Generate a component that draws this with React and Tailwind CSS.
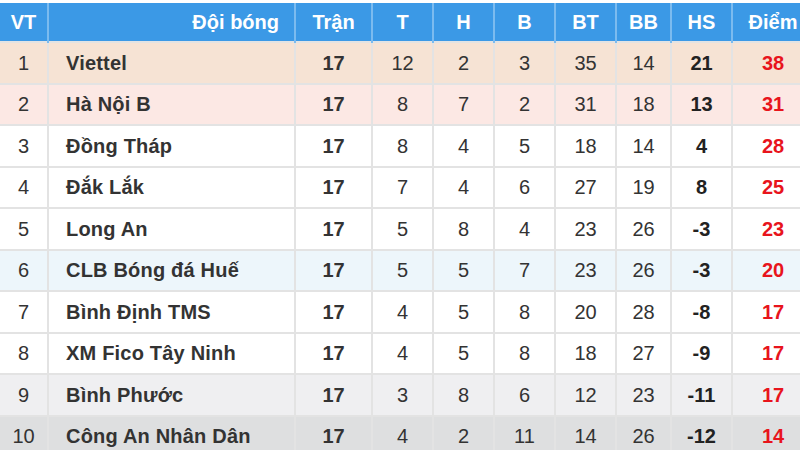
import React from 'react'

const rows = [
  { vt: 1, team: 'Viettel', p: 17, w: 12, d: 2, l: 3, gf: 35, ga: 14, gd: 21, pts: 38, bg: 'bg-[#f6e3d4]' },
  { vt: 2, team: 'Hà Nội B', p: 17, w: 8, d: 7, l: 2, gf: 31, ga: 18, gd: 13, pts: 31, bg: 'bg-[#fce8e4]' },
  { vt: 3, team: 'Đồng Tháp', p: 17, w: 8, d: 4, l: 5, gf: 18, ga: 14, gd: 4, pts: 28, bg: 'bg-white' },
  { vt: 4, team: 'Đắk Lắk', p: 17, w: 7, d: 4, l: 6, gf: 27, ga: 19, gd: 8, pts: 25, bg: 'bg-white' },
  { vt: 5, team: 'Long An', p: 17, w: 5, d: 8, l: 4, gf: 23, ga: 26, gd: -3, pts: 23, bg: 'bg-white' },
  { vt: 6, team: 'CLB Bóng đá Huế', p: 17, w: 5, d: 5, l: 7, gf: 23, ga: 26, gd: -3, pts: 20, bg: 'bg-[#edf6fb]' },
  { vt: 7, team: 'Bình Định TMS', p: 17, w: 4, d: 5, l: 8, gf: 20, ga: 28, gd: -8, pts: 17, bg: 'bg-white' },
  { vt: 8, team: 'XM Fico Tây Ninh', p: 17, w: 4, d: 5, l: 8, gf: 18, ga: 27, gd: -9, pts: 17, bg: 'bg-white' },
  { vt: 9, team: 'Bình Phước', p: 17, w: 3, d: 8, l: 6, gf: 12, ga: 23, gd: -11, pts: 17, bg: 'bg-[#efeff1]' },
  { vt: 10, team: 'Công An Nhân Dân', p: 17, w: 4, d: 2, l: 11, gf: 14, ga: 26, gd: -12, pts: 14, bg: 'bg-[#dedfe0]' },
]

const widths = ['w-[48px]', 'w-[247px]', 'w-[77px]', 'w-[61px]', 'w-[61px]', 'w-[61px]', 'w-[61px]', 'w-[55px]', 'w-[61px]', 'w-[82px]']

export default function App() {
  return (
    <div className="w-[800px] h-[450px] overflow-hidden bg-white pt-[3px] font-['Liberation_Sans',Arial,sans-serif] text-[20px] text-[#333]">
      <table className="w-[814px] table-fixed border-collapse">
        <colgroup>
          {widths.map((w, i) => (
            <col key={i} className={w} />
          ))}
        </colgroup>
        <thead>
          <tr className="h-[39px] bg-[#3b99e6] text-white font-bold">
            <th className="border-r-2 border-[#7bbbef] text-center">VT</th>
            <th className="border-x-2 border-[#7bbbef] text-right pr-[15px]">Đội bóng</th>
            <th className="border-x-2 border-[#7bbbef] text-center">Trận</th>
            <th className="border-x-2 border-[#7bbbef] text-center">T</th>
            <th className="border-x-2 border-[#7bbbef] text-center">H</th>
            <th className="border-x-2 border-[#7bbbef] text-center">B</th>
            <th className="border-x-2 border-[#7bbbef] text-center">BT</th>
            <th className="border-x-2 border-[#7bbbef] text-center">BB</th>
            <th className="border-x-2 border-[#7bbbef] text-center">HS</th>
            <th className="border-x-2 border-[#7bbbef] text-center">Điểm</th>
          </tr>
        </thead>
        <tbody>
          {rows.map((r) => (
            <tr key={r.vt} className={`h-[41.5px] ${r.bg}`}>
              <td className="border-y-2 border-r-2 border-[#e3e3e3] text-center">{r.vt}</td>
              <td className="border-2 border-[#e3e3e3] pl-[17px] font-bold tracking-[0.2px]">{r.team}</td>
              <td className="border-2 border-[#e3e3e3] text-center font-bold">{r.p}</td>
              <td className="border-2 border-[#e3e3e3] text-center">{r.w}</td>
              <td className="border-2 border-[#e3e3e3] text-center">{r.d}</td>
              <td className="border-2 border-[#e3e3e3] text-center">{r.l}</td>
              <td className="border-2 border-[#e3e3e3] text-center">{r.gf}</td>
              <td className="border-2 border-[#e3e3e3] text-center">{r.ga}</td>
              <td className="border-2 border-[#e3e3e3] text-center font-bold text-[#222]">{r.gd}</td>
              <td className="border-2 border-[#e3e3e3] text-center font-bold text-[#e8141c]">{r.pts}</td>
            </tr>
          ))}
        </tbody>
      </table>
    </div>
  )
}
